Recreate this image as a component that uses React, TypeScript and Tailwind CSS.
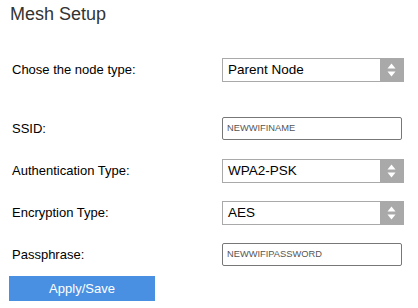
import React from "react";

const arial = { fontFamily: "'Liberation Sans', Arial, sans-serif" };

function Arrows() {
  return (
    <div className="w-[23px] h-full bg-[#a9a9a9] flex items-center justify-center">
      <svg width="9" height="14" viewBox="0 0 9 14">
        <polygon points="4.5,0.5 8.5,5.5 0.5,5.5" fill="#ffffff" />
        <polygon points="0.5,8.5 8.5,8.5 4.5,13.5" fill="#ffffff" />
      </svg>
    </div>
  );
}

function SelectBox({ value }: { value: string }) {
  return (
    <div className="w-[182px] h-[24px] border border-[#a9a9a9] flex items-stretch bg-white">
      <div className="flex-1 flex items-center pl-[5px] text-[13.5px] text-black" style={arial}>
        {value}
      </div>
      <Arrows />
    </div>
  );
}

function InputBox({ value }: { value: string }) {
  return (
    <div className="w-[180px] h-[23px] border border-[#777777] rounded-[2px] flex items-center pl-[4px] text-[9.3px] text-[#555555]" style={arial}>
      {value}
    </div>
  );
}

function Row({ label, children }: { label: string; children: React.ReactNode }) {
  return (
    <div className="flex items-center">
      <div className="w-[210px] text-[13px] text-black" style={arial}>{label}</div>
      {children}
    </div>
  );
}

export default function App() {
  return (
    <div className="w-[418px] h-[308px] bg-white relative overflow-hidden">
      <div className="pl-[10px] pt-[2px] text-[18px] text-[#333333] leading-[24px]" style={arial}>
        Mesh Setup
      </div>
      <div className="pl-[12px] mt-[32px] flex flex-col">
        <Row label="Chose the node type:"><SelectBox value="Parent Node" /></Row>
        <div className="h-[35px]" />
        <Row label="SSID:"><InputBox value="NEWWIFINAME" /></Row>
        <div className="h-[19px]" />
        <Row label="Authentication Type:"><SelectBox value="WPA2-PSK" /></Row>
        <div className="h-[18px]" />
        <Row label="Encryption Type:"><SelectBox value="AES" /></Row>
        <div className="h-[18px]" />
        <Row label="Passphrase:"><InputBox value="NEWWIFIPASSWORD" /></Row>
      </div>
      <div className="pl-[9px] mt-[10px]">
        <button className="w-[146px] h-[25px] bg-[#4a90e2] text-white text-[13px] flex items-center justify-center" style={arial}>
          Apply/Save
        </button>
      </div>
    </div>
  );
}
